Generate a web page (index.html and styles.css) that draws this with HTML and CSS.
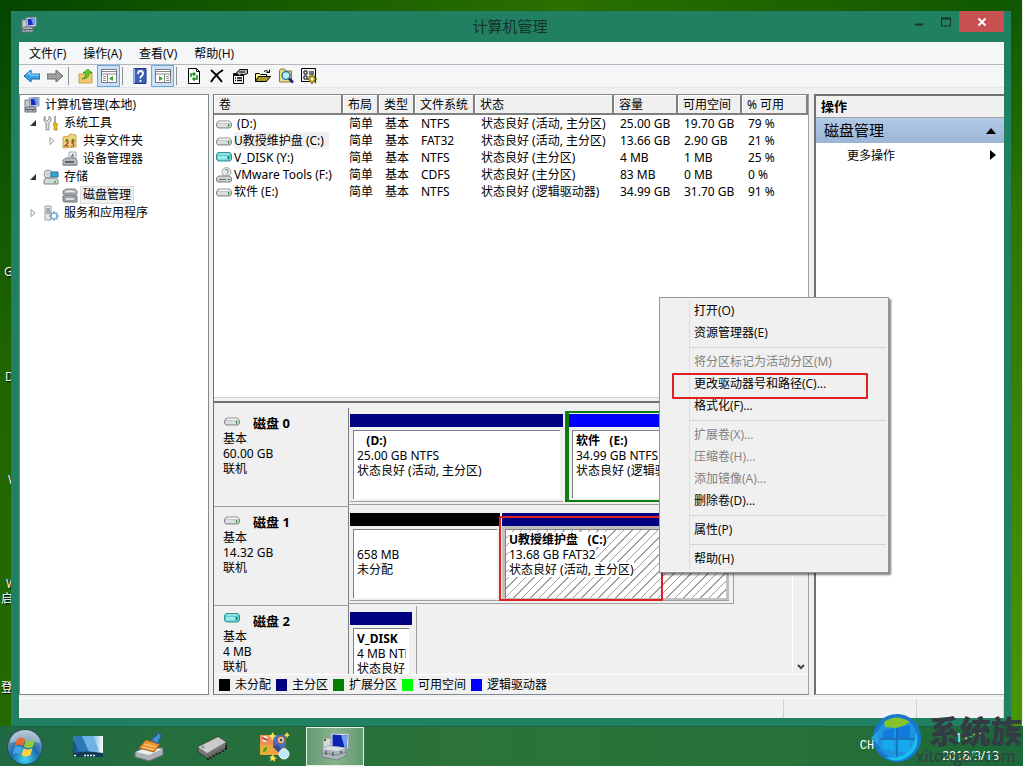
FILE: index.html
```html
<!DOCTYPE html>
<html lang="zh-CN">
<head>
    <meta charset="UTF-8">
    <meta name="viewport" content="width=device-width, initial-scale=1.0">
    <title>计算机管理</title>
    <link rel="stylesheet" href="styles.css">
</head>
<body>
    <!-- shared icons -->
    <svg class="sprites" aria-hidden="true">
        <symbol id="i-computer" viewBox="0 0 16 16">
            <path d="M1 3h5v9H1z" fill="#c8ccd0" stroke="#777f88"/>
            <path d="M5 1l10-1v9L6 10z" fill="#e4e8ec" stroke="#8b939c"/>
            <path d="M6.500 2l7-.8v6.600l-6.500.8z" fill="#1430c0"/>
            <path d="M10 1.600l3.500-.4v6.600l-1.500.2z" fill="#6f9af0"/>
            <path d="M1 11l2-1h7l2 1v4H1z" fill="#b3b9c0" stroke="#676f78"/>
            <path d="M1 12.500h11M4 12v2M9 12v2" stroke="#555d66"/>
        </symbol>
        <symbol id="i-tools" viewBox="0 0 16 16">
            <path d="M2 1v3l2 2 2-2V1l2 2v3L6 8v7H3V8L1 6V3z" fill="#d9dcdf" stroke="#7d8287" stroke-width=".8"/>
            <path d="M12 1v7" stroke="#8a8f94" stroke-width="1.500"/>
            <path d="M10.500 8h3l1 2-.8 2 .5 3h-3.400l.5-3-.8-2z" fill="#f3b61c" stroke="#a97908" stroke-width=".7"/>
        </symbol>
        <symbol id="i-share" viewBox="0 0 16 16">
            <path d="M1 4l6-1 1-2 6 1v12l-13 1z" fill="#f2d57b" stroke="#c9a750"/>
            <path d="M3 8h3v2L3 13h4M9 8h3l-2 2q3 1 1 3H9" fill="none" stroke="#a53c27" stroke-width="1.200"/>
            <circle cx="5" cy="7" r="1.200" fill="#4a8b3a"/><circle cx="11" cy="7" r="1.200" fill="#4a8b3a"/>
        </symbol>
        <symbol id="i-device" viewBox="0 0 16 16">
            <path d="M7 1h7v8H7z" fill="#eef0f2" stroke="#a2a9b0"/>
            <path d="M9 6l2-3v4" fill="none" stroke="#566"/>
            <path d="M1 9l3-2h9l2 2v5H1z" fill="#b5bcc2" stroke="#7c848b"/>
            <path d="M3 10h9v2H3z" fill="#5c646b"/><path d="M1 14h14" stroke="#7d858c"/>
        </symbol>
        <symbol id="i-storage" viewBox="0 0 16 16">
            <circle cx="5" cy="5" r="4" fill="#dde3e8" stroke="#8a939b"/>
            <circle cx="5" cy="5" r="1.200" fill="#fff" stroke="#8a939b" stroke-width=".6"/>
            <path d="M8 3h7v5H8z" fill="#35a8d8" stroke="#2b6c98"/>
            <path d="M1 11l2-2h10l2 2v4H1z" fill="#d4d8d6" stroke="#7f8785"/>
            <path d="M11 13h2" stroke="#29b33a" stroke-width="1.500"/>
        </symbol>
        <symbol id="i-diskmgmt" viewBox="0 0 16 16">
            <path d="M1 4l3-2h9l2 2v3H1z" fill="#b7bbbe" stroke="#7a7f83"/>
            <path d="M1 9l2-1h10l2 1v6H2l-1-1z" fill="#9da1a4" stroke="#777c80"/>
            <path d="M4 5q4-2 8 0" fill="none" stroke="#fff"/>
            <path d="M4 11h8v2H4z" fill="#dfe2e4"/>
        </symbol>
        <symbol id="i-services" viewBox="0 0 16 16">
            <path d="M2 1h6v14H2z" fill="#e2e6e9" stroke="#9ba3aa"/>
            <path d="M3 4h4M3 6h4M3 8h4" stroke="#697178"/>
            <circle cx="11" cy="11" r="3" fill="none" stroke="#7fadd0" stroke-width="1.600"/>
            <path d="M11 6v2M11 14v2M6 11h2M14 11h2M7.500 7.500L9 9M13 13l1.500 1.500M14.500 7.500L13 9" stroke="#7fadd0" stroke-width="1.400"/>
        </symbol>
        <symbol id="i-disk" viewBox="0 0 16 16">
            <path d="M.5 7.500l2-2.500h11l2 2.500v3l-1.500 1.500H2L.5 10.500z" fill="#c3c5c6" stroke="#85898b"/>
            <path d="M2 7l1.500-1.500h9.500L14.500 7z" fill="#f4f4f4"/>
            <path d="M1.500 8h10v3h-10z" fill="#dcddde"/><path d="M12.500 8v2.500" stroke="#2c8a33"/>
        </symbol>
        <symbol id="i-disk-cyan" viewBox="0 0 16 16">
            <path d="M.5 4.500l1.500-2h12l1.500 2v5l-1.500 1.500H2L.5 9.500z" fill="#54cdd1" stroke="#3a8f97"/>
            <path d="M2 4.500l1-1h10l1 1z" fill="#c4f6f5"/>
            <path d="M2 6h9v3.500H2z" fill="#9de9ea"/><path d="M12.500 6v3" stroke="#125f58"/>
        </symbol>
        <symbol id="i-cd" viewBox="0 0 16 16">
            <circle cx="10.500" cy="5" r="4.500" fill="#e9ebec" stroke="#a3a8ab"/>
            <path d="M9 2.500h3v2.500l-1.500 2.500" fill="none" stroke="#888d90"/>
            <path d="M.5 11l2-2h11l2 2v3L14 15H2L.5 14z" fill="#cfd2d3" stroke="#7b7f81"/>
            <path d="M3 12.500h7" stroke="#6d7173"/><path d="M12 12.500h2" stroke="#29a035"/>
        </symbol>
    </svg>

    <main class="desktop">
        <span class="shortcut shortcut-g">G</span>
        <span class="shortcut shortcut-d">D</span>
        <span class="shortcut shortcut-v">W</span>
        <span class="shortcut shortcut-w">W</span>
        <span class="shortcut shortcut-start">启</span>
        <span class="shortcut shortcut-login">登</span>

        <section class="window">
            <header class="titlebar">
                <svg class="icon"><use href="#i-computer"/></svg>
                <h1>计算机管理</h1>
                <div class="window-buttons">
                    <button class="win-btn" aria-label="最小化"><svg viewBox="0 0 12 12"><path d="M2 8.500h8" stroke="#16302a" stroke-width="2"/></svg></button>
                    <button class="win-btn" aria-label="最大化"><svg viewBox="0 0 12 12"><path d="M1.500 2v8h9V2" fill="none" stroke="#16302a"/><path d="M1 2.500h10" stroke="#16302a" stroke-width="2"/></svg></button>
                    <button class="win-btn close" aria-label="关闭"><svg viewBox="0 0 12 12"><path d="M2.500 2.500l7 7M9.500 2.500l-7 7" stroke="#fff" stroke-width="2"/></svg></button>
                </div>
            </header>

            <div class="client">
                <nav class="menubar">
                    <button>文件(F)</button>
                    <button>操作(A)</button>
                    <button>查看(V)</button>
                    <button>帮助(H)</button>
                </nav>

                <div class="toolbar">
                    <button aria-label="后退"><svg class="icon" viewBox="0 0 16 16"><path d="M0 8l7-6v4h9v5H7v3z" fill="#35a3e6" stroke="#176397"/><path d="M3 7l3-3v3h9" fill="none" stroke="#a4e2ff"/></svg></button>
                    <button aria-label="前进"><svg class="icon" viewBox="0 0 16 16"><path d="M16 8L9 2v4H0v5h9v3z" fill="#a0a0a0" stroke="#666"/></svg></button>
                    <span class="separator"></span>
                    <button aria-label="向上"><svg class="icon" viewBox="0 0 16 16"><path d="M1 6h5l1-2h7v11H1z" fill="#efc96a" stroke="#cda04a"/><path d="M4 11q4-1 4-6H5l5-4 4 4h-3q0 6-7 6z" fill="#5fca35" stroke="#2f8a1c" stroke-width=".7"/></svg></button>
                    <button class="pressed" aria-label="显示控制台树"><svg class="icon" viewBox="0 0 16 16"><path d="M.5 1.500h15v13H.5z" fill="#fff" stroke="#777"/><path d="M1 3.500h14M1 6h14" stroke="#888"/><path d="M6.500 6v8M2 8.500h3M2 10.500h3M2 12.500h3" stroke="#888"/><path d="M12 8v5L8 10.500z" fill="#36a52d"/></svg></button>
                    <span class="separator"></span>
                    <button aria-label="帮助"><svg class="icon" viewBox="0 0 16 16"><path d="M2 .5h12v15H2z" fill="#3c5fb8" stroke="#223879"/><path d="M2.500 1v14" stroke="#a6bcf0"/><path d="M6 6q0-3 2.500-3T11 5.500Q11 7 9.500 8T8.500 10.500M8.500 12v2" fill="none" stroke="#fff" stroke-width="1.800"/></svg></button>
                    <button class="pressed" aria-label="显示操作窗格"><svg class="icon" viewBox="0 0 16 16"><path d="M.5 1.500h15v13H.5z" fill="#fff" stroke="#777"/><path d="M1 3.500h14M1 6h14" stroke="#888"/><path d="M9.500 6v8M11 8.500h3M11 10.500h3M11 12.500h3" stroke="#888"/><path d="M4 8v5l4-2.500z" fill="#36a52d"/></svg></button>
                    <span class="separator"></span>
                    <button aria-label="刷新"><svg class="icon" viewBox="0 0 16 16"><path d="M2.500.5h8l3 3v12h-11z" fill="#fff" stroke="#000"/><path d="M10.500.5v3h3" fill="none" stroke="#000"/><path d="M5 9V6h3M11 7v4H8" fill="none" stroke="#138613" stroke-width="1.500"/><path d="M7.500 3.500v5L10 6zM8.500 8.500v5L6 11z" fill="#138613"/></svg></button>
                    <button aria-label="删除"><svg class="icon" viewBox="0 0 16 16"><path d="M2 2q6 5 11 12M14 2Q7 6 2 14" fill="none" stroke="#000" stroke-width="2"/></svg></button>
                    <button aria-label="属性"><svg class="icon" viewBox="0 0 16 16"><path d="M1.500 5.500h10v10h-10z" fill="#fff" stroke="#000"/><path d="M2 7h9" stroke="#000" stroke-width="2"/><path d="M3 10h1M5 10h5M3 12.500h1M5 12.500h5" stroke="#000" stroke-width="1.500"/><path d="M4.500 5l3-3.500h8v4l-4 1.500-2-1-2 2z" fill="#b5b5b5" stroke="#000"/><path d="M7 4h6" stroke="#000"/></svg></button>
                    <button aria-label="打开"><svg class="icon" viewBox="0 0 16 16"><path d="M.5 13.500V5.500h4l1 1h6v2" fill="#fff799" stroke="#000"/><path d="M.5 13.500l3-5h12l-4 5z" fill="#a99c24" stroke="#000"/><path d="M9 3.500q2-2 4 0l1 1M14.500 1.500v3h-3" fill="none" stroke="#000"/></svg></button>
                    <button aria-label="查找"><svg class="icon" viewBox="0 0 16 16"><path d="M1.500 3l1-2h4l1 2h6v11h-12z" fill="#f2dd83" stroke="#8e7831"/><circle cx="8" cy="7.500" r="4" fill="#b8ecf7" stroke="#217d9c" stroke-width="1.500"/><path d="M11 10.500l4 4" stroke="#202080" stroke-width="2.500"/></svg></button>
                    <button aria-label="设置"><svg class="icon" viewBox="0 0 16 16"><path d="M.5.5h14v13H.5z" fill="#eee" stroke="#000"/><path d="M3 3h3v3H3zM3 8h3v3H3z" fill="#fff" stroke="#000"/><path d="M8 4h5M8 6h5" stroke="#000"/><circle cx="11" cy="11" r="2.500" fill="#fff" stroke="#b5a413" stroke-width="2"/><path d="M11 6v2M11 14v2M6 11h2M14 11h2M8 8l1 1M13 13l2 2M14 8l-1 1M8 14l1-1" stroke="#5e5407" stroke-width="1.500"/></svg></button>
                </div>

                <div class="panes">
                    <aside class="tree">
                        <ul>
                            <li class="level-0"><svg class="icon"><use href="#i-computer"/></svg><span>计算机管理(本地)</span></li>
                            <li class="level-1"><svg class="arrow" viewBox="0 0 8 8"><path d="M7 1v6H1z" fill="#333"/></svg><svg class="icon"><use href="#i-tools"/></svg><span>系统工具</span></li>
                            <li class="level-2"><svg class="arrow" viewBox="0 0 8 8"><path d="M2 .5L6 4 2 7.500z" fill="#fff" stroke="#999"/></svg><svg class="icon"><use href="#i-share"/></svg><span>共享文件夹</span></li>
                            <li class="level-2"><i class="arrow"></i><svg class="icon"><use href="#i-device"/></svg><span>设备管理器</span></li>
                            <li class="level-1"><svg class="arrow" viewBox="0 0 8 8"><path d="M7 1v6H1z" fill="#333"/></svg><svg class="icon"><use href="#i-storage"/></svg><span>存储</span></li>
                            <li class="level-2"><i class="arrow"></i><svg class="icon"><use href="#i-diskmgmt"/></svg><span class="selected">磁盘管理</span></li>
                            <li class="level-1"><svg class="arrow" viewBox="0 0 8 8"><path d="M2 .5L6 4 2 7.500z" fill="#fff" stroke="#999"/></svg><svg class="icon"><use href="#i-services"/></svg><span>服务和应用程序</span></li>
                        </ul>
                    </aside>

                    <section class="center">
                        <div class="volumes">
                            <table>
                                <colgroup>
                                    <col class="c-name"><col class="c-short"><col class="c-short"><col class="c-fs"><col class="c-status"><col class="c-size"><col class="c-size"><col>
                                </colgroup>
                                <thead>
                                    <tr><th>卷</th><th>布局</th><th>类型</th><th>文件系统</th><th>状态</th><th>容量</th><th>可用空间</th><th>% 可用</th></tr>
                                </thead>
                                <tbody>
                                    <tr><td><svg class="icon"><use href="#i-disk"/></svg><span>&nbsp;(D:)</span></td><td>简单</td><td>基本</td><td>NTFS</td><td>状态良好 (活动, 主分区)</td><td>25.00 GB</td><td>19.70 GB</td><td>79 %</td></tr>
                                    <tr><td><svg class="icon"><use href="#i-disk"/></svg><span class="selected">U教授维护盘 (C:)</span></td><td>简单</td><td>基本</td><td>FAT32</td><td>状态良好 (活动, 主分区)</td><td>13.66 GB</td><td>2.90 GB</td><td>21 %</td></tr>
                                    <tr><td><svg class="icon"><use href="#i-disk-cyan"/></svg><span>V_DISK (Y:)</span></td><td>简单</td><td>基本</td><td>NTFS</td><td>状态良好 (主分区)</td><td>4 MB</td><td>1 MB</td><td>25 %</td></tr>
                                    <tr><td><svg class="icon"><use href="#i-cd"/></svg><span>VMware Tools (F:)</span></td><td>简单</td><td>基本</td><td>CDFS</td><td>状态良好 (主分区)</td><td>83 MB</td><td>0 MB</td><td>0 %</td></tr>
                                    <tr><td><svg class="icon"><use href="#i-disk"/></svg><span>软件 (E:)</span></td><td>简单</td><td>基本</td><td>NTFS</td><td>状态良好 (逻辑驱动器)</td><td>34.99 GB</td><td>31.70 GB</td><td>91 %</td></tr>
                                </tbody>
                            </table>
                        </div>

                        <div class="splitter"></div>

                        <div class="disks">
                            <div class="disk-list">
                                <article class="disk">
                                    <div class="disk-label">
                                        <h2><svg class="icon"><use href="#i-disk"/></svg>磁盘 0</h2>
                                        <p>基本</p><p>60.00 GB</p><p>联机</p>
                                    </div>
                                    <div class="parts wide">
                                        <div class="part primary">
                                            <div class="part-body"><b>&nbsp;&nbsp; (D:)</b><p>25.00 GB NTFS</p><p>状态良好 (活动, 主分区)</p></div>
                                        </div>
                                        <div class="extended">
                                            <div class="part logical">
                                                <div class="part-body"><b>软件 &nbsp; (E:)</b><p>34.99 GB NTFS</p><p>状态良好 (逻辑驱动器)</p></div>
                                            </div>
                                        </div>
                                    </div>
                                </article>
                                <article class="disk">
                                    <div class="disk-label">
                                        <h2><svg class="icon"><use href="#i-disk"/></svg>磁盘 1</h2>
                                        <p>基本</p><p>14.32 GB</p><p>联机</p>
                                    </div>
                                    <div class="parts medium">
                                        <div class="part unallocated">
                                            <div class="part-body"><br><p>658 MB</p><p>未分配</p></div>
                                        </div>
                                        <div class="part primary active">
                                            <div class="part-body"><b>U教授维护盘 &nbsp; (C:)</b><p>13.68 GB FAT32</p><p>状态良好 (活动, 主分区)</p></div>
                                            <span class="highlight"></span>
                                        </div>
                                    </div>
                                </article>
                                <article class="disk">
                                    <div class="disk-label">
                                        <h2><svg class="icon"><use href="#i-disk-cyan"/></svg>磁盘 2</h2>
                                        <p>基本</p><p>4 MB</p><p>联机</p>
                                    </div>
                                    <div class="parts small">
                                        <div class="part primary">
                                            <div class="part-body"><b>V_DISK</b><p>4 MB NTFS</p><p>状态良好 (主分区)</p></div>
                                        </div>
                                    </div>
                                </article>
                            </div>
                            <div class="scrollbar"><svg viewBox="0 0 8 6"><path d="M1 1l3 3 3-3" fill="none" stroke="#444" stroke-width="2"/></svg></div>
                        </div>

                        <ul class="legend">
                            <li><i class="k-unallocated"></i>未分配</li>
                            <li><i class="k-primary"></i>主分区</li>
                            <li><i class="k-extended"></i>扩展分区</li>
                            <li><i class="k-free"></i>可用空间</li>
                            <li><i class="k-logical"></i>逻辑驱动器</li>
                        </ul>
                    </section>

                    <aside class="actions">
                        <h2>操作</h2>
                        <button class="action-group">磁盘管理<svg viewBox="0 0 10 6"><path d="M0 6l5-6 5 6z"/></svg></button>
                        <button class="action">更多操作<svg viewBox="0 0 6 10"><path d="M0 0l6 5-6 5z"/></svg></button>
                    </aside>
                </div>

                <footer class="statusbar"><span></span><span></span><span></span></footer>
            </div>
        </section>

        <div class="context-menu" role="menu">
            <button role="menuitem">打开(O)</button>
            <button role="menuitem">资源管理器(E)</button>
            <hr>
            <button role="menuitem" disabled>将分区标记为活动分区(M)</button>
            <button role="menuitem" class="marked">更改驱动器号和路径(C)...</button>
            <button role="menuitem">格式化(F)...</button>
            <hr>
            <button role="menuitem" disabled>扩展卷(X)...</button>
            <button role="menuitem" disabled>压缩卷(H)...</button>
            <button role="menuitem" disabled>添加镜像(A)...</button>
            <button role="menuitem">删除卷(D)...</button>
            <hr>
            <button role="menuitem">属性(P)</button>
            <hr>
            <button role="menuitem">帮助(H)</button>
        </div>
    </main>

    <footer class="taskbar">
        <button class="start" aria-label="开始">
            <svg viewBox="0 0 38 38">
                <defs><radialGradient id="orb" cx=".5" cy=".85" r=".8"><stop offset="0" stop-color="#41d3f5"/><stop offset=".5" stop-color="#1c6da8"/><stop offset="1" stop-color="#8ea9bb"/></radialGradient></defs>
                <circle cx="19" cy="19" r="17.500" fill="url(#orb)" stroke="#1d4a63"/>
                <path d="M4 15a15 13 0 0 1 30 0q-15-5-30 0z" fill="#fff" opacity=".35"/>
                <path d="M11 11q4-3 8 0l-2 7q-4-3-8 0z" fill="#ef6b2b"/>
                <path d="M20 11.500q4 3 9 0l-2 7q-5 3-9 0z" fill="#94cb3c"/>
                <path d="M8.500 19.500q4-3 8 0l-2 7q-4-3-8 0z" fill="#43a5e8"/>
                <path d="M17.500 20q4 3 9 0l-2 7q-5 3-9 0z" fill="#fbd23d"/>
            </svg>
        </button>
        <button class="task" aria-label="显示桌面">
            <svg viewBox="0 0 32 32"><defs><linearGradient id="screen" x1="0" y1="0" x2="1" y2="0"><stop offset="0" stop-color="#124f86"/><stop offset=".55" stop-color="#4f9ed6"/><stop offset="1" stop-color="#fff"/></linearGradient></defs><path d="M1 5h30v21H1z" fill="url(#screen)"/><path d="M10 5l8 18-8 1L1 9V5z" fill="#2c77b5"/><path d="M10 5h11l6 15-9 3z" fill="#6db4e2"/><path d="M1 22q15-3 30 0v4H1z" fill="#123b55"/><path d="M2 24.500h3M12 24.500h12" stroke="#fff" stroke-width="1.500" stroke-dasharray="2 1"/></svg>
        </button>
        <button class="task" aria-label="磁盘清理">
            <svg viewBox="0 0 32 32"><path d="M1 21l10-5 18 1v7l-14 6L1 26z" fill="#aab0b5" stroke="#666d72"/><path d="M2 21l10-4 16 1-13 6z" fill="#edf0f1"/><path d="M5 17l7-8 14 4-6 8z" fill="#eb9534" stroke="#ac5c13"/><path d="M8 16l12 3M10 13l12 3" stroke="#ffd18b"/><path d="M17 9l6-5 1-3 2 3 2-1-3 6-1 4z" fill="#438fd0" stroke="#285e91"/></svg>
        </button>
        <button class="task" aria-label="内存">
            <svg viewBox="0 0 32 32"><path d="M2 16L22 6l8 5v6L11 27 2 21z" fill="#777" stroke="#333"/><path d="M2 16L22 6l8 5-19 11z" fill="#cbcbcb"/><path d="M12 23v6M15 22v6M18 20v6M21 19v5M24 17v6M27 16v5M30 14v5" stroke="#222" stroke-width="1.800"/><path d="M12 23v4M15 22v4M18 20v4M21 19v3M24 17v4M27 16v3" stroke="#ddd" stroke-width=".7"/><circle cx="7" cy="16" r="1.500" fill="#888"/></svg>
        </button>
        <button class="task" aria-label="图像工具">
            <svg viewBox="0 0 32 32"><path d="M2 4h26v20H2z" fill="#efa343"/><path d="M2 4h13v10H2z" fill="#ed8e5a"/><path d="M15 4h13v13H15z" fill="#4e6cba"/><path d="M2 14h12v10H2z" fill="#edaa3c"/><circle cx="7" cy="8" r="3" fill="#f2efe9"/><path d="M4 7l6 2" stroke="#bc4e3c" stroke-width="2"/><circle cx="23" cy="9" r="3.500" fill="#e9dfc9" stroke="#b84e20"/><circle cx="23" cy="9" r="1.500" fill="#444"/><path d="M5 21q0-5 4-5 0 5-4 5z" fill="#39aa25"/><path d="M15 16l4-3 7 7-3 4z" fill="#3c4e91"/><circle cx="26" cy="23" r="5" fill="#bfe8fb" stroke="#eef8ff"/><path d="M15 1l1 3 3 1-3 1-1 4-2-4-3-1 3-1zM15 23l1 3 3 1-2 1v3l-2-2-3 1 1-3-2-1 3-1zM29 1l1 2 2 1-2 1-1 2-1-2-2-1 2-1z" fill="#ffe44e"/></svg>
        </button>
        <button class="task current" aria-label="计算机管理">
            <svg viewBox="0 0 32 32"><path d="M4 7h8v11H4z" fill="#d5dbd9" stroke="#8c9794"/><path d="M5 9h2" stroke="#27722f" stroke-width="2"/><path d="M12 2l18 1-1 15-17-2z" fill="#dde5eb" stroke="#99a5aa"/><path d="M13.500 3.500l15 1-1 12-14-1.500z" fill="#0c24b4"/><path d="M22 4l6.500.5-1 12-2-.3z" fill="#759ff0"/><path d="M3 18l6-3 18 2v8l-9 4L3 26z" fill="#a9b3b8" stroke="#78848a"/><path d="M3 18l6-3 18 2-9 3z" fill="#d9e0e3"/><path d="M3 22l15 2 9-3" fill="none" stroke="#7c888e"/><path d="M7 20v4M14 21v4M22 20v3" stroke="#59646a" stroke-width="1.500"/></svg>
        </button>
        <div class="tray">
            <span class="lang">CH</span>
            <div class="clock"><time>11:17</time><time>2018/3/13</time></div>
        </div>
        <div class="watermark">
            <svg viewBox="0 0 52 52">
                <circle cx="27" cy="26" r="22" fill="#1d96df" stroke="#1977cf" stroke-width="4"/>
                <path d="M1 26l7-7v14z" fill="#2b9ee8"/>
                <path d="M14 10q12-9 26 0l-7 4-7 2-11-1z" fill="#84c42a"/>
                <path d="M13 19l11-3v10H13zM26 16l14-3v13H26z" fill="#1479dc"/>
                <path d="M13 28h11v11l-11-3zM26 28h14v13l-14-2z" fill="#15a9ef"/>
                <path d="M27 16v32M10 27h36" stroke="#176ab2" stroke-width="1.500"/>
                <path d="M46 20q6 17-12 27-11 4-18-2 15 2 22-5 7-7 8-20z" fill="#18c0f0"/>
            </svg>
            <div><strong>系统族</strong><span>xitongzu.com</span></div>
        </div>
    </footer>
</body>
</html>
```

FILE: styles.css
```css
* {
    box-sizing: border-box;
}
body {
    display: flex;
    flex-direction: column;
    height: 100vh;
    margin: 0;
    overflow: hidden;
    color: #000;
    font-family: "Open Sans", "Noto Sans CJK SC", sans-serif;
    font-size: 12px;
    line-height: 15px;
}
h1, h2, p, ul {
    margin: 0;
    padding: 0;
}
ul {
    list-style: none;
}
button {
    border: none;
    padding: 0;
    background: none;
    color: inherit;
    font: inherit;
}
svg {
    display: block;
    flex: none;
}
.sprites {
    position: absolute;
    width: 0;
    height: 0;
}
.icon {
    width: 16px;
    height: 16px;
}

/* desktop */
.desktop {
    position: relative;
    flex: 1;
    display: flex;
    min-height: 0;
    padding: 11px 11px 0 11px;
    border-right: 1px solid #e8f0e4;
    background:
        linear-gradient(90deg, #034600, #2a7000 55%, #0f5700) top / 100% 11px no-repeat,
        linear-gradient(#0f5700, #2d7600 30%, #499600) right / 14px 100% no-repeat,
        linear-gradient(#034600, #206500 50%, #256a00);
}
.shortcut {
    position: absolute;
    left: 4px;
    color: #fff;
    text-shadow: 1px 1px 1px #000;
}
.shortcut-g {
    top: 264px;
}
.shortcut-d {
    left: 5px;
    top: 369px;
}
.shortcut-v {
    left: 8px;
    top: 472px;
}
.shortcut-w {
    left: 6px;
    top: 576px;
}
.shortcut-start {
    left: 1px;
    top: 591px;
}
.shortcut-login {
    left: 1px;
    top: 680px;
}

/* window */
.window {
    position: relative;
    flex: 1;
    display: flex;
    flex-direction: column;
    min-width: 0;
    padding: 0 7px 8px 8px;
    background: #208061;
}
.titlebar {
    display: flex;
    justify-content: space-between;
    height: 31px;
}
.titlebar .icon {
    margin: 6px 0 0 2px;
}
.titlebar h1 {
    flex: 1;
    padding-left: 78px;
    color: #14342a;
    font-size: 15px;
    font-weight: 400;
    line-height: 31px;
    text-align: center;
}
.window-buttons {
    display: flex;
    height: 21px;
}
.win-btn {
    display: flex;
    align-items: center;
    justify-content: center;
    width: 27px;
}
.win-btn svg {
    width: 12px;
    height: 12px;
}
.win-btn.close {
    width: 45px;
    background: #c75050;
}
.client {
    flex: 1;
    display: flex;
    flex-direction: column;
    min-height: 0;
    background: #f0f0f0;
}
.menubar {
    display: flex;
    gap: 17px;
    height: 23px;
    padding: 0 10px;
    border-bottom: 1px solid #b4b8bc;
    background: #f5f6f7;
}
.toolbar {
    display: flex;
    align-items: center;
    height: 23px;
    padding-left: 1px;
    border-bottom: 1px solid #e2e4e6;
    background: #f5f6f7;
}
.toolbar button {
    display: flex;
    align-items: center;
    justify-content: center;
    width: 23px;
    height: 22px;
}
.toolbar .pressed {
    border: 1px solid #66a7e8;
    background: #c9e0f7;
}
.separator {
    width: 8px;
    height: 18px;
    background: linear-gradient(#909090, #909090) 2px 0 / 1px 100% no-repeat;
}

/* panes */
.panes {
    flex: 1;
    display: flex;
    gap: 4px;
    min-height: 0;
    padding: 6px 0 3px;
}
.tree {
    width: 190px;
    padding-top: 1px;
    border: 1px solid #828790;
    background: #fff;
}
.tree li {
    display: flex;
    align-items: center;
    height: 18px;
    white-space: nowrap;
}
.tree .icon {
    margin-right: 2px;
}
.tree li span {
    padding: 0 3px;
    line-height: 18px;
}
.tree .selected {
    background: #f0f0f0;
    box-shadow: 0 0 0 1px #dedede inset;
}
.arrow {
    width: 8px;
    height: 8px;
    margin-right: 6px;
}
.level-0 {
    padding-left: 4px;
}
.level-1 {
    padding-left: 9px;
}
.level-2 {
    padding-left: 28px;
}
.center {
    flex: 1;
    display: flex;
    flex-direction: column;
    min-width: 0;
    border: 1px solid #828790;
    border-left-color: #707070;
    border-right-color: #a0a0a0;
    font-family: "Noto Sans", "Noto Sans CJK SC", sans-serif;
}
.volumes {
    flex: 1;
    min-height: 0;
    overflow: hidden;
    background: #fff;
}
.volumes table {
    width: 100%;
    table-layout: fixed;
    border-collapse: separate;
    border-spacing: 0;
    white-space: nowrap;
}
.c-name {
    width: 129px;
}
.c-short {
    width: 36px;
}
.c-fs {
    width: 60px;
}
.c-status {
    width: 139px;
}
.c-size {
    width: 64px;
}
.volumes th {
    height: 20px;
    padding: 2px 5px 0;
    border-right: 2px solid #808080;
    border-bottom: 2px solid #808080;
    background: #f0f0f0;
    box-shadow: inset 1px 1px 0 #fff;
    font-weight: 400;
    line-height: 16px;
    text-align: left;
}
.volumes td {
    height: 17px;
    padding: 0 0 0 6px;
    line-height: 17px;
}
.volumes td:first-child {
    display: flex;
    align-items: center;
    gap: 2px;
    padding-left: 2px;
}
.volumes .selected {
    padding-right: 5px;
    background: #f0f0f0;
}
.splitter {
    height: 6px;
    border-top: 1px solid #d0d0d0;
    border-bottom: 2px solid #707070;
}

/* disk map */
.disks {
    display: flex;
    height: 271px;
    padding-top: 5px;
}
.disk-list {
    flex: 1;
    min-width: 0;
    overflow: hidden;
}
.disk {
    display: flex;
    height: 99px;
}
.disk-label {
    flex: none;
    width: 135px;
    padding: 8px 0 0 9px;
    border-right: 1px solid #808080;
    border-bottom: 1px solid #a0a0a0;
}
.disk-label h2 {
    display: flex;
    gap: 13px;
    height: 15px;
    font-size: 13px;
    line-height: 15px;
}
.disk-label .icon {
    margin: -3px 0 0 1px;
}
.parts {
    display: flex;
    gap: 2px;
    min-width: 0;
    height: 97px;
    padding: 3px 1px 2px;
    border-right: 1px solid #a0a0a0;
    border-bottom: 1px solid #a0a0a0;
    white-space: nowrap;
}
.wide {
    flex: 1;
}
.medium {
    width: 385px;
    padding-right: 4px;
}
.small {
    width: 68px;
    padding-right: 4px;
}
.part {
    position: relative;
    flex: 1;
    min-width: 0;
    margin-top: 3px;
    padding-top: 13px;
    border-bottom: 1px solid #a0a0a0;
    background: #f0f0f0;
}
.part::before {
    content: "";
    position: absolute;
    inset: 0 0 auto;
    height: 13px;
    background: #000080;
}
.part.unallocated::before {
    background: #000;
}
.part.logical::before {
    background: #0000ff;
}
.part-body {
    height: 69px;
    margin: 3px 3px 0 3px;
    padding: 2px 3px;
    border-top: 1px solid #808080;
    border-left: 1px solid #808080;
    background: #fff;
    overflow: clip;
    overflow-clip-margin: content-box;
}
.part-body b {
    display: block;
    font-size: 12px;
}
.wide > .part {
    flex: none;
    width: 213px;
}
.extended {
    flex: 1;
    display: flex;
    min-width: 0;
    border: 2px solid #107c10;
    border-left-width: 4px;
}
.extended .part {
    margin-top: 1px;
    border: none;
}
.extended .part-body {
    height: 68px;
}
.unallocated {
    flex: none;
    width: 150px;
}
.active {
    background: #c0c0c0;
}
.active .part-body {
    background: repeating-linear-gradient(135deg, #fff 0 5px, #a0a0a0 5px 6px);
}
.active .part-body b,
.active .part-body p {
    width: max-content;
    background: #fff;
}
.highlight {
    position: absolute;
    inset: 3px auto -1px -3px;
    width: 164px;
    border: 2px solid #e02020;
    border-radius: 1px;
}
.scrollbar {
    display: flex;
    align-items: flex-end;
    justify-content: center;
    width: 16px;
    padding-bottom: 4px;
    border-left: 1px solid #fff;
}
.scrollbar svg {
    width: 8px;
    height: 6px;
}
.legend {
    display: flex;
    gap: 5px;
    height: 20px;
    padding-left: 5px;
    border-top: 1px solid #fff;
    line-height: 19px;
}
.legend li {
    display: flex;
    align-items: center;
    gap: 5px;
}
.legend i {
    width: 11px;
    height: 12px;
}
.k-unallocated {
    background: #000;
}
.k-primary {
    background: #000080;
}
.k-extended {
    background: #008000;
}
.k-free {
    background: #00ff00;
}
.k-logical {
    background: #0000ff;
}

/* actions */
.actions {
    width: 190px;
    margin-left: 1px;
    border-top: 2px solid #707070;
    border-left: 2px solid #707070;
    border-bottom: 1px solid #a0a0a0;
    background: #fff;
}
.actions h2 {
    height: 22px;
    padding-left: 5px;
    border-bottom: 1px solid #a0a0a0;
    background: #f0f0f0;
    font-size: 13px;
    line-height: 20px;
}
.action-group,
.action {
    display: flex;
    align-items: center;
    justify-content: space-between;
    width: 100%;
    padding: 0 8px;
}
.action-group {
    height: 25px;
    background: linear-gradient(#b2cae6, #9bb5d6);
    font-size: 15px;
}
.action-group svg {
    width: 10px;
    height: 6px;
}
.action {
    height: 24px;
    padding-left: 31px;
}
.action svg {
    width: 6px;
    height: 10px;
}
.statusbar {
    display: flex;
    height: 20px;
    border-top: 1px solid #fff;
}
.statusbar span {
    border-right: 1px solid #d0d0d0;
}
.statusbar span:first-child {
    flex: 1;
}
.statusbar span:nth-child(2) {
    width: 133px;
}
.statusbar span:last-child {
    width: 87px;
}

/* context menu */
.context-menu {
    position: absolute;
    left: 659px;
    top: 297px;
    width: 230px;
    padding: 2px;
    border: 1px solid #979797;
    background: linear-gradient(#dcdcdc, #dcdcdc) 29px 2px / 1px calc(100% - 4px) no-repeat #f0f0f0;
    box-shadow: 2px 2px 2px rgba(0, 0, 0, 0.5);
}
.context-menu button {
    position: relative;
    display: block;
    width: 100%;
    height: 22px;
    padding: 0 0 2px 32px;
    text-align: left;
}
.context-menu button:disabled {
    color: #808080;
}
.context-menu hr {
    height: 1px;
    margin: 3px 0 3px 28px;
    border: none;
    background: #d4d4d4;
}
.context-menu .marked::after {
    content: "";
    position: absolute;
    inset: 0 18px -4px 10px;
    border: 2px solid #e02020;
    border-radius: 1px;
}

/* taskbar */
.taskbar {
    position: relative;
    display: flex;
    align-items: center;
    height: 40px;
    padding-left: 6px;
    border-top: 1px solid #1b6244;
    background: linear-gradient(90deg, #1f6a42, #2b7338 45%, #28723a 75%, #1c683a);
}
.start {
    width: 38px;
    height: 38px;
    margin-right: 14px;
}
.task {
    display: flex;
    align-items: center;
    justify-content: center;
    width: 60px;
    height: 39px;
    margin-right: 2px;
}
.task svg {
    width: 32px;
    height: 32px;
}
.task.current {
    width: 58px;
    border: 1px solid #e0efe0;
    background: linear-gradient(90deg, #629a72, #88b48d 50%, #629a72);
}
.tray {
    display: flex;
    align-items: center;
    gap: 68px;
    margin-left: auto;
    padding-right: 24px;
    color: #fff;
}
.lang {
    font-family: "Liberation Mono", monospace;
}
.clock {
    display: flex;
    flex-direction: column;
    align-items: center;
    line-height: 18px;
}
.watermark {
    position: absolute;
    right: 0;
    bottom: 2px;
    display: flex;
    align-items: center;
    width: 153px;
    height: 52px;
}
.watermark svg {
    width: 52px;
    height: 52px;
}
.watermark div {
    position: absolute;
    left: 46px;
    bottom: 0;
    color: #333c42;
    white-space: nowrap;
}
.watermark strong {
    display: block;
    padding-left: 13px;
    font-size: 31px;
    font-weight: 900;
    line-height: 34px;
}
.watermark span {
    display: block;
    font-size: 16px;
    line-height: 16px;
}
```
